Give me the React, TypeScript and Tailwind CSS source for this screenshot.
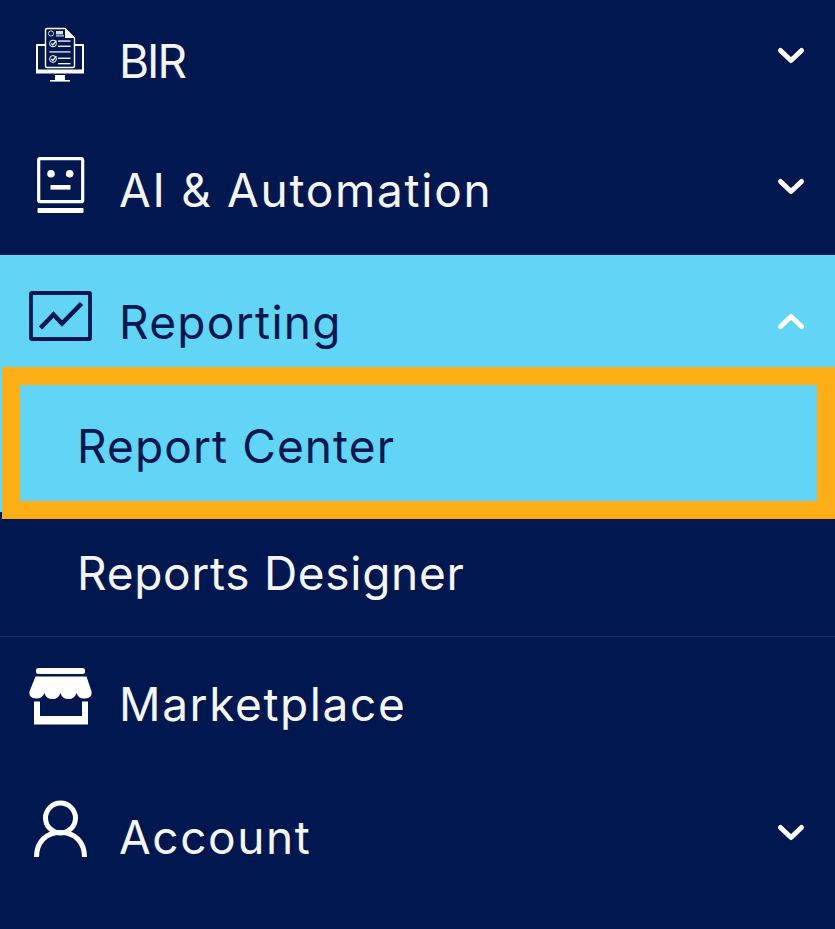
import React from "react";

const Chevron = ({ up = false, className = "" }: { up?: boolean; className?: string }) => (
  <svg width="32" height="20" viewBox="0 0 32 20" className={`shrink-0 ${className}`} fill="none" stroke="#ffffff" strokeWidth="5" strokeLinecap="round" strokeLinejoin="round">
    {up ? <path d="M5.5 15.5 L16 5.5 L26.5 15.5" /> : <path d="M5.5 4.5 L16 14.5 L26.5 4.5" />}
  </svg>
);

const BirIcon = () => (
  <svg width="64" height="64" viewBox="28 29 64 64" className="shrink-0" fill="none" style={{ overflow: "visible" }}>
    <path d="M37 45 H83 V72 H37 Z" stroke="#fff" strokeWidth="2" />
    <rect x="36" y="69.5" width="48" height="4" fill="#fff" />
    <rect x="55" y="75" width="10" height="5.5" fill="#fff" />
    <rect x="50" y="80" width="20" height="1.6" fill="#fff" />
    <path d="M47 28.5 H65 L74.5 38 V66 Q74.5 67.5 73 67.5 H47 Q45.5 67.5 45.5 66 V30 Q45.5 28.5 47 28.5 Z" fill="#00174f" stroke="#fff" strokeWidth="1.4" />
    <path d="M65 28.5 V38 H74.5 Z" fill="#fff" />
    <circle cx="51" cy="33.5" r="2.6" stroke="#fff" strokeWidth="0.8" />
    <rect x="56" y="31" width="7" height="3.4" fill="#fff" opacity="0.85" />
    <rect x="56" y="35.4" width="8" height="1" fill="#fff" />
    <circle cx="53" cy="43.5" r="3.4" stroke="#fff" strokeWidth="1" />
    <path d="M51.4 43.4 L52.8 45 L56.4 40.6" stroke="#fff" strokeWidth="1.3" />
    <rect x="58" y="40.4" width="12.5" height="1.3" fill="#fff" />
    <rect x="58" y="45.6" width="12.5" height="1.3" fill="#fff" />
    <rect x="49.5" y="51.2" width="21" height="1.4" fill="#fff" opacity="0.85" />
    <circle cx="53" cy="59" r="3.4" stroke="#fff" strokeWidth="1" />
    <path d="M51.4 58.9 L52.8 60.5 L56.4 56.1" stroke="#fff" strokeWidth="1.3" />
    <rect x="58" y="57.6" width="12.5" height="1.3" fill="#fff" />
    <rect x="58" y="63" width="12.5" height="1.3" fill="#fff" />
  </svg>
);

const BotIcon = () => (
  <svg width="64" height="64" viewBox="28 157 64 64" className="shrink-0" fill="none" style={{ overflow: "visible" }}>
    <rect x="38.7" y="157.7" width="44" height="43" rx="1.5" stroke="#fff" strokeWidth="3.2" />
    <circle cx="51" cy="172.8" r="3.8" fill="#fff" />
    <circle cx="69.7" cy="172.8" r="3.8" fill="#fff" />
    <rect x="50.5" y="184" width="20" height="4.6" fill="#fff" />
    <rect x="37.5" y="207" width="46" height="5" rx="1" fill="#fff" />
  </svg>
);

const ChartIcon = () => (
  <svg width="64" height="64" viewBox="28 290 64 64" className="shrink-0" fill="none" stroke="#00174f">
    <rect x="31" y="293" width="59" height="46" rx="1" strokeWidth="3.8" />
    <path d="M40.5 328 L53.5 314.5 L62 323.5 L81.5 303.5" strokeWidth="4.6" strokeLinejoin="miter" />
  </svg>
);

const StoreIcon = () => (
  <svg width="64" height="64" viewBox="28 672 64 64" className="shrink-0" fill="#fff" style={{ overflow: "visible" }}>
    <rect x="36" y="668" width="49" height="6" rx="2.5" />
    <path d="M35.5 676.5 H86.5 L91.7 692 Q92 698 85 698.5 Q78.5 699 76.5 693 Q74.5 699 68.5 699 Q62 699 60.5 693 Q58.5 699 52.5 699 Q46 699 44.5 693 Q42.5 698.5 36 698.5 Q29 698 29.3 692 Z" />
    <path d="M34 701.5 H40 V716 H82 V701.5 H88 V724.5 H34 Z" />
  </svg>
);

const UserIcon = () => (
  <svg width="64" height="64" viewBox="28 805 64 64" className="shrink-0" fill="none" stroke="#fff" strokeWidth="5" style={{ overflow: "visible" }}>
    <circle cx="60.5" cy="818" r="15" />
    <path d="M36.5 857 C36.5 842 46 832.5 60.5 832.5 C75 832.5 84.5 842 84.5 857" />
  </svg>
);

const Row = ({
  icon,
  label,
  tracking,
  chevronClass,
  className = "",
}: {
  icon: React.ReactNode;
  label: string;
  tracking: string;
  chevronClass?: string;
  className?: string;
}) => (
  <div className={`flex items-center pl-[28px] pr-[28px] ${className}`}>
    {icon}
    <span className={`ml-[27px] flex-1 text-[46px] leading-none text-[#f5f5f7] ${tracking}`}>{label}</span>
    {chevronClass && <Chevron className={chevronClass} />}
  </div>
);

export default function App() {
  return (
    <div className="h-[929px] w-[835px] overflow-hidden bg-[#00174f] font-['Inter','Liberation_Sans',sans-serif]">
      <Row icon={<BirIcon />} label="BIR" tracking="tracking-[-2px]" chevronClass="mb-[10px]" className="h-[122px]" />
      <Row icon={<BotIcon />} label="AI & Automation" tracking="tracking-[1.7px]" chevronClass="mb-[6px]" className="h-[133px] pt-[3px]" />
      <div className="bg-[#62d4f5]">
        <div className="flex h-[112px] items-center pl-[28px] pr-[28px] pt-[22px]">
          <ChartIcon />
          <span className="ml-[27px] flex-1 text-[46px] leading-none tracking-[1.3px] text-[#00174f]">Reporting</span>
          <Chevron up className="mb-[2px]" />
        </div>
        <div className="h-[145px] pl-[2px]">
          <div className="relative flex h-[152px] items-center border-[18px] border-[#fdae16] bg-[#62d4f5] pl-[57px] pt-[6px]">
            <span className="text-[46px] leading-none tracking-[1.1px] text-[#00174f]">Report Center</span>
          </div>
        </div>
      </div>
      <div className="mt-[7px] flex h-[118px] items-center border-b border-[#1a2f66] pb-[9px] pl-[77px]">
        <span className="text-[46px] leading-none tracking-[0.7px] text-[#f5f5f7]">Reports Designer</span>
      </div>
      <Row icon={<StoreIcon />} label="Marketplace" tracking="tracking-[1.6px]" className="h-[134px]" />
      <Row icon={<UserIcon />} label="Account" tracking="tracking-[1.6px]" chevronClass="mb-[8px]" className="h-[132px]" />
    </div>
  );
}
